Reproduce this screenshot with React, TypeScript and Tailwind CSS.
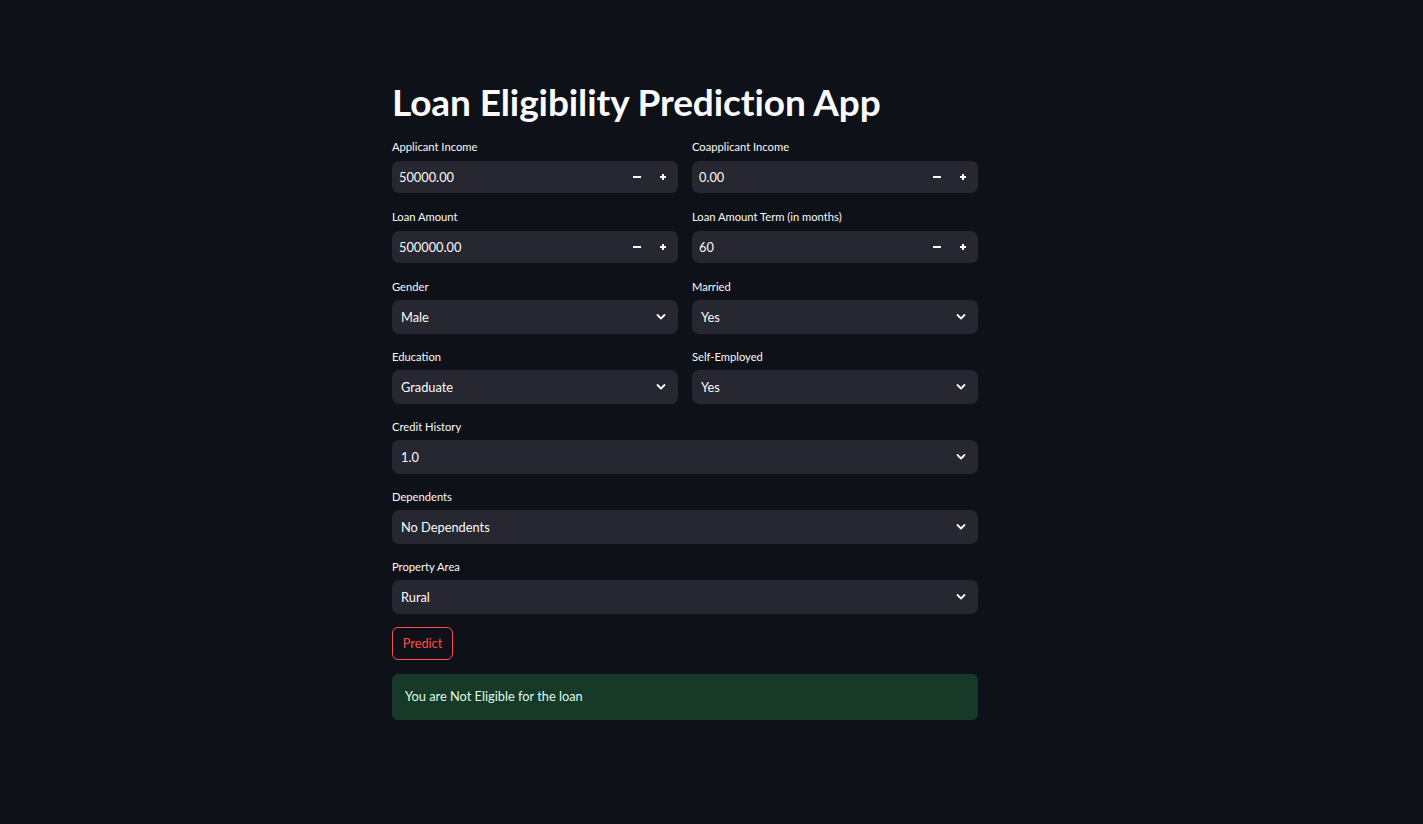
import React from "react";

const font = { fontFamily: "Lato, 'Noto Sans', 'Liberation Sans', sans-serif" };

function Label({ children }: { children: React.ReactNode }) {
  return <div className="h-[14px] text-[11.2px] leading-[14px] text-[#fafafa]">{children}</div>;
}

function Minus() {
  return (
    <svg width="10" height="10" viewBox="0 0 10 10">
      <rect x="1" y="4" width="8" height="2" fill="#fafafa" />
    </svg>
  );
}
function Plus() {
  return (
    <svg width="10" height="10" viewBox="0 0 10 10">
      <rect x="2" y="4" width="6" height="2" fill="#fafafa" />
      <rect x="4" y="2" width="2" height="6" fill="#fafafa" />
    </svg>
  );
}
function Chevron() {
  return (
    <svg width="10" height="8" viewBox="0 0 10 8">
      <path d="M1.5 2 L5 5.5 L8.5 2" stroke="#fafafa" strokeWidth="1.8" fill="none" strokeLinecap="round" strokeLinejoin="round" />
    </svg>
  );
}

function NumberField({ label, value }: { label: string; value: string }) {
  return (
    <div className="flex flex-col">
      <Label>{label}</Label>
      <div className="mt-[7px] flex h-[32px] items-center rounded-[7px] bg-[#262730] pl-[7px] pr-[2px]">
        <span className="flex-1 pt-[1px] text-[12.8px] text-[#fafafa]">{value}</span>
        <span className="flex w-[26px] items-center justify-center"><Minus /></span>
        <span className="flex w-[26px] items-center justify-center"><Plus /></span>
      </div>
    </div>
  );
}

function SelectField({ label, value }: { label: string; value: string }) {
  return (
    <div className="flex flex-col">
      <Label>{label}</Label>
      <div className="mt-[6px] flex h-[34px] items-center rounded-[7px] bg-[#262730] pl-[9px] pr-[12px]">
        <span className="flex-1 pt-[1px] text-[12.8px] text-[#fafafa]">{value}</span>
        <Chevron />
      </div>
    </div>
  );
}

export default function App() {
  return (
    <div className="min-h-screen w-full bg-[#0e1117]" style={font}>
      <div className="ml-[392px] w-[586px] pt-[81px] pb-[100px]">
        <h1 className="h-[42px] text-[37px] font-bold leading-[42px] text-[#fafafa] tracking-[-0.1px]">Loan Eligibility Prediction App</h1>
        <div className="mt-[17px] grid grid-cols-2 gap-x-[14px] gap-y-[17px]">
          <NumberField label="Applicant Income" value="50000.00" />
          <NumberField label="Coapplicant Income" value="0.00" />
          <NumberField label="Loan Amount" value="500000.00" />
          <NumberField label="Loan Amount Term (in months)" value="60" />
        </div>
        <div className="mt-[17px] grid grid-cols-2 gap-x-[14px] gap-y-[16px]">
          <SelectField label="Gender" value="Male" />
          <SelectField label="Married" value="Yes" />
          <SelectField label="Education" value="Graduate" />
          <SelectField label="Self-Employed" value="Yes" />
        </div>
        <div className="mt-[16px] flex flex-col gap-[16px]">
          <SelectField label="Credit History" value="1.0" />
          <SelectField label="Dependents" value="No Dependents" />
          <SelectField label="Property Area" value="Rural" />
        </div>
        <button className="mt-[13px] flex h-[33px] w-[61px] items-center justify-center rounded-[6px] border border-[#ff4b4b] bg-transparent text-[12.8px] text-[#ff4b4b]">
          Predict
        </button>
        <div className="mt-[14px] flex h-[46px] items-center rounded-[6px] bg-[#173928] pl-[13px] text-[12.8px] text-[#dffde9]">
          You are Not Eligible for the loan
        </div>
      </div>
    </div>
  );
}
